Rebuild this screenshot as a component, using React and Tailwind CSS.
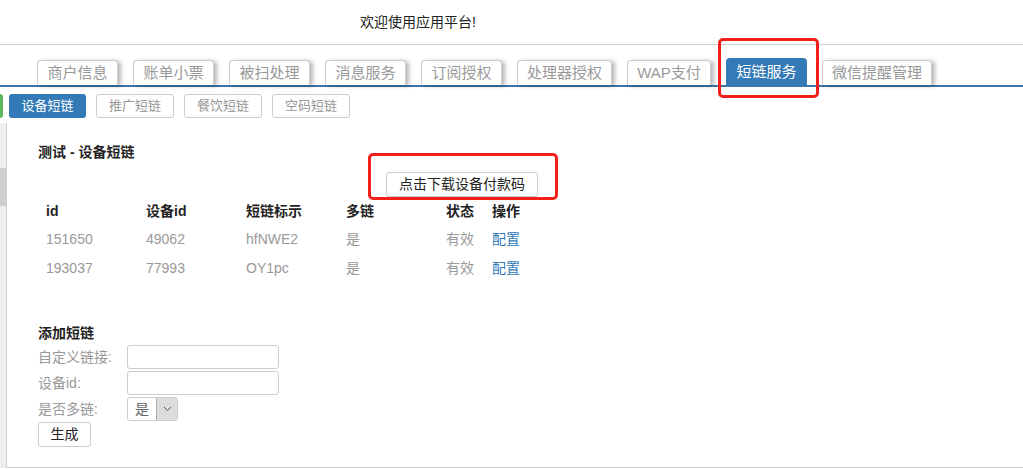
import React from "react";

const tabs = [
  ["商户信息", "w-[81px]"],
  ["账单小票", "w-[81px]"],
  ["被扫处理", "w-[81px]"],
  ["消息服务", "w-[81px]"],
  ["订阅授权", "w-[81px]"],
  ["处理器授权", "w-[95px]"],
  ["WAP支付", "w-[84px]"],
  ["短链服务", "w-[81px]"],
  ["微信提醒管理", "w-[110px]"],
];
const subs = ["设备短链", "推广短链", "餐饮短链", "空码短链"];
const rows = [
  ["151650", "49062", "hfNWE2", "是", "有效"],
  ["193037", "77993", "OY1pc", "是", "有效"],
];
const heads = [
  ["id", "w-[100px]"],
  ["设备id", "w-[100px]"],
  ["短链标示", "w-[100px]"],
  ["多链", "w-[100px]"],
  ["状态", "w-[46px]"],
  ["操作", ""],
];

export default function App() {
  return (
    <div
      className="relative w-[1023px] h-[469px] overflow-hidden bg-white text-[14px] text-[#333]"
      style={{ fontFamily: '"Liberation Sans", "Noto Sans CJK SC", sans-serif' }}
    >
      {/* header */}
      <div className="h-[45px] border-b border-[#d0d0d0] pl-[360px] pt-[12px] leading-[20px] text-[#222]">
        欢迎使用应用平台!
      </div>

      {/* tabs */}
      <div className="flex items-end pl-[37px] h-[42px] border-b-2 border-[#3a76ab] text-[15px]">
        {tabs.map(([t, w], i) => {
          const active = t === "短链服务";
          return (
            <div
              key={t}
              className={
                (i > 0 ? "ml-[15px] " : "") +
                w +
                (active
                  ? " h-[27px] rounded-t-[4px] bg-[#337ab7] text-white text-center leading-[27px]"
                  : " h-[25px] rounded-t-[4px] border border-b-0 border-[#ccc] text-[#999] text-center leading-[24px] shadow-[3px_1px_4px_rgba(0,0,0,0.28)]")
              }
            >
              {t}
            </div>
          );
        })}
      </div>

      {/* sub buttons */}
      <div className="flex items-center mt-[7px] h-[24px] text-[13px]">
        <div className="w-[3px] h-[24px] bg-[#5cb85c] rounded-r-[3px] mr-[6px]" />
        <div className="flex gap-[10px]">
          {subs.map((s, i) => (
            <div
              key={s}
              className={
                i === 0
                  ? "w-[77px] h-[24px] rounded-[3px] bg-[#337ab7] text-white text-center leading-[24px]"
                  : "w-[78px] h-[24px] rounded-[3px] border border-[#ccc] text-[#999] text-center leading-[22px]"
              }
            >
              {s}
            </div>
          ))}
        </div>
      </div>

      {/* panel */}
      <div className="flex mt-[5px] h-[345px]">
        <div className="w-[6px] bg-[#efefef] flex flex-col">
          <div className="h-[45px]" />
          <div className="h-[38px] bg-[#cfcfcf]" />
        </div>
        <div className="flex-1 border-l border-b border-[#d0d0d0] pl-[31px] pt-[19px]">
          <div className="font-bold leading-[20px] text-[#222]">测试 - 设备短链</div>
          <div className="mt-[10px] ml-[348px]">
            <div className="w-[152px] h-[25px] border border-[#ccc] rounded-[3px] text-center leading-[23px] text-[#222]">
              点击下载设备付款码
            </div>
          </div>
          <table className="border-collapse">
            <thead>
              <tr className="h-[28px]">
                {heads.map(([h, w]) => (
                  <th key={h} className={w + " px-[8px] text-left font-bold text-[#222]"}>
                    {h}
                  </th>
                ))}
              </tr>
            </thead>
            <tbody>
              {rows.map((r) => (
                <tr key={r[0]} className="h-[29px] text-[#999]">
                  {r.map((c, i) => (
                    <td key={i} className="px-[8px]">{c}</td>
                  ))}
                  <td className="px-[8px] text-[#337ab7]">配置</td>
                </tr>
              ))}
            </tbody>
          </table>

          <div className="mt-[40px] font-bold leading-[20px] text-[#222]">添加短链</div>
          <div className="flex flex-col gap-[2px] mt-[2px]">
            {["自定义链接:", "设备id:"].map((l) => (
              <div key={l} className="flex items-center h-[24px]">
                <div className="w-[89px] text-[#999]">{l}</div>
                <div className="w-[152px] h-[24px] border border-[#ccc] rounded-[3px]" />
              </div>
            ))}
            <div className="flex items-center h-[24px]">
              <div className="w-[89px] text-[#999]">是否多链:</div>
              <div className="flex w-[51px] h-[24px] border border-[#ccc] rounded-[3px] overflow-hidden">
                <div className="flex-1 pl-[7px] leading-[22px] text-[#666]">是</div>
                <div className="w-[21px] bg-[#dcdcdc] border-l border-[#aaa] flex items-center justify-center">
                  <svg width="9" height="6" viewBox="0 0 9 6" fill="none">
                    <path d="M1 1l3.5 3.5L8 1" stroke="#555" strokeWidth="1" />
                  </svg>
                </div>
              </div>
            </div>
          </div>
          <div className="mt-[1px] w-[53px] h-[25px] border border-[#ccc] rounded-[3px] text-center leading-[23px] text-[#222]">
            生成
          </div>
        </div>
      </div>

      {/* annotation boxes */}
      <div className="absolute left-[718px] top-[38px] w-[101px] h-[60px] border-[3px] border-[#f2201a] rounded-[5px]" />
      <div className="absolute left-[368px] top-[153px] w-[190px] h-[47px] border-[3px] border-[#f2201a] rounded-[5px]" />
    </div>
  );
}
